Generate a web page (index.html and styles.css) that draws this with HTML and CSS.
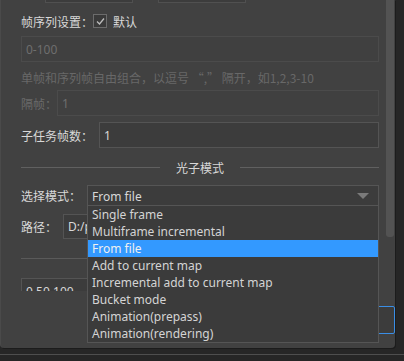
FILE: index.html
```html
<!DOCTYPE html>
<html lang="zh-CN">
<head>
  <meta charset="UTF-8">
  <meta name="viewport" content="width=device-width, initial-scale=1.0">
  <link rel="stylesheet" href="styles.css">
  <title>渲染设置</title>
</head>
<body>
  <div class="panel">
    <div class="viewport">
      <div class="content">
        <div class="row size-row">
          <input class="field small" type="text" value="">
          <input class="field small" type="text" value="">
        </div>

        <div class="row frame-row">
          <span class="label">帧序列设置：</span>
          <span class="check">
            <svg width="11" height="11" viewBox="0 0 11 11"><path d="M2 5.5 L4.5 8 L9 2.5" fill="none" stroke="#bdbdbd" stroke-width="1.3"/></svg>
          </span>
          <span class="label check-text">默认</span>
        </div>

        <input class="field full disabled frames" type="text" value="0-100" disabled>
        <div class="hint">单帧和序列帧自由组合，以逗号 “,” 隔开，如1,2,3-10</div>

        <div class="row step-row">
          <span class="label dim">隔帧：</span>
          <input class="field grow disabled" type="text" value="1" disabled>
        </div>

        <div class="row task-row">
          <span class="label">子任务帧数：</span>
          <input class="field grow" type="text" value="1">
        </div>

        <div class="section">
          <span class="line"></span>
          <span class="section-title">光子模式</span>
          <span class="line"></span>
        </div>

        <div class="row mode-row">
          <span class="label">选择模式：</span>
          <div class="combo">
            <span>From file</span>
            <svg class="arrow" width="12" height="7" viewBox="0 0 12 7"><path d="M0 0 H12 L6 6 Z" fill="#7a7a7a"/></svg>
          </div>
        </div>

        <div class="row path-row">
          <span class="label">路径：</span>
          <input class="field grow" type="text" value="D:/photon/map.vrmap">
        </div>

        <div class="rule"></div>

        <div class="row">
          <input class="field quarter" type="text" value="0.50,100">
        </div>
      </div>
      <div class="scrollbar"><div class="thumb"></div></div>
    </div>

    <div class="footer">
      <button class="btn focused" type="button">确定</button>
    </div>

    <ul class="popup">
      <li>Single frame</li>
      <li>Multiframe incremental</li>
      <li class="active">From file</li>
      <li>Add to current map</li>
      <li>Incremental add to current map</li>
      <li>Bucket mode</li>
      <li>Animation(prepass)</li>
      <li>Animation(rendering)</li>
    </ul>
  </div>
  <div class="taskbar"></div>
</body>
</html>
```

FILE: styles.css
```css
body {
  margin: 0;
  background-color: #262626;
  font-family: "Noto Sans", "Noto Sans CJK SC", sans-serif;
  font-size: 12px;
  color: #d8d8d8;
  overflow: hidden;
}
.panel {
  position: relative;
  width: 394px;
  height: 348px;
  background-color: #414141;
  border-left: 1px solid #4a4a4a;
  border-radius: 0 0 4px 4px;
  box-shadow: 1px 1px 0 #1c1c1c;
}
.viewport {
  position: relative;
  height: 291px;
  overflow: hidden;
}
.content {
  margin-top: -22px;
  padding-left: 20px;
  width: 358px;
}
.row {
  display: flex;
  align-items: center;
}
.label {
  font-family: "Noto Sans CJK SC", sans-serif;
  white-space: nowrap;
}
.dim {
  color: #6a6a6a;
}
.field {
  box-sizing: border-box;
  height: 26px;
  background-color: #3c3c3c;
  border: 1px solid #545454;
  color: #d8d8d8;
  font-family: "Noto Sans", sans-serif;
  font-size: 12px;
  padding: 0 4px;
  outline: none;
}
.field.disabled {
  background-color: #404040;
  border-color: #4b4b4b;
  color: #6e6e6e;
}
.size-row {
  height: 25px;
  gap: 25px;
  padding-left: 24px;
}
.size-row .field {
  height: 25px;
  width: 88px;
  border-color: #505050;
}
.frame-row {
  margin-top: 9px;
  height: 18px;
}
.check {
  box-sizing: border-box;
  width: 14px;
  height: 14px;
  border: 1px solid #6c6c6c;
  background-color: #3a3a3a;
  display: flex;
  align-items: center;
  justify-content: center;
}
.check-text {
  margin-left: 6px;
}
.full {
  display: block;
  width: 100%;
}
.frames {
  margin-top: 6px;
}
.hint {
  margin-top: 8px;
  height: 16px;
  line-height: 16px;
  color: #686868;
  font-family: "Noto Sans CJK SC", sans-serif;
  white-space: nowrap;
}
.grow {
  flex: 1;
  min-width: 0;
}
.step-row {
  margin-top: 4px;
}
.task-row {
  margin-top: 6px;
}
.task-row .field {
  margin-left: 6px;
}
.section {
  margin-top: 12px;
  height: 14px;
  display: flex;
  align-items: center;
  gap: 16px;
}
.line {
  flex: 1;
  height: 1px;
  background-color: #606060;
}
.section-title {
  font-family: "Noto Sans CJK SC", sans-serif;
}
.mode-row {
  margin-top: 11px;
}
.combo {
  position: relative;
  box-sizing: border-box;
  flex: 1;
  height: 21px;
  margin-left: 6px;
  background-color: #3c3c3c;
  border: 1px solid #555555;
  border-bottom: none;
  padding: 0 4px;
  display: flex;
  align-items: center;
}
.combo .arrow {
  margin-left: auto;
  margin-right: 5px;
}
.path-row {
  margin-top: 8px;
}
.path-row .field {
  height: 25px;
  margin-left: 6px;
}
.rule {
  margin-top: 19px;
  height: 1px;
  background-color: #5a5a5a;
}
.rule + .row {
  margin-top: 19px;
}
.quarter {
  width: 120px;
}
.scrollbar {
  position: absolute;
  top: 0;
  right: 1px;
  width: 8px;
  height: 291px;
}
.thumb {
  height: 237px;
  background-color: #535353;
  border-radius: 0 0 3px 3px;
}
.footer {
  display: flex;
  justify-content: flex-end;
  padding-top: 15px;
}
.btn {
  width: 80px;
  height: 28px;
  background-color: #3c3c3c;
  border: 1px solid #4d4d4d;
  border-radius: 2px;
  color: #d8d8d8;
  font-family: "Noto Sans CJK SC", sans-serif;
  font-size: 12px;
}
.btn.focused {
  border-color: #3a8ee6;
}
.popup {
  position: absolute;
  left: 86px;
  top: 205px;
  width: 290px;
  margin: 0;
  padding: 0;
  list-style: none;
  background-color: #3b3b3b;
  border: 1px solid #555555;
  font-family: "Noto Sans", sans-serif;
}
.popup li {
  height: 17px;
  line-height: 17px;
  padding-left: 4px;
  color: #d4d4d4;
  white-space: nowrap;
}
.popup li.active {
  background-color: #3399ff;
  color: #f0f0f0;
}
.taskbar {
  margin-top: 6px;
  height: 1px;
  background-color: #4e4e4e;
}
```
